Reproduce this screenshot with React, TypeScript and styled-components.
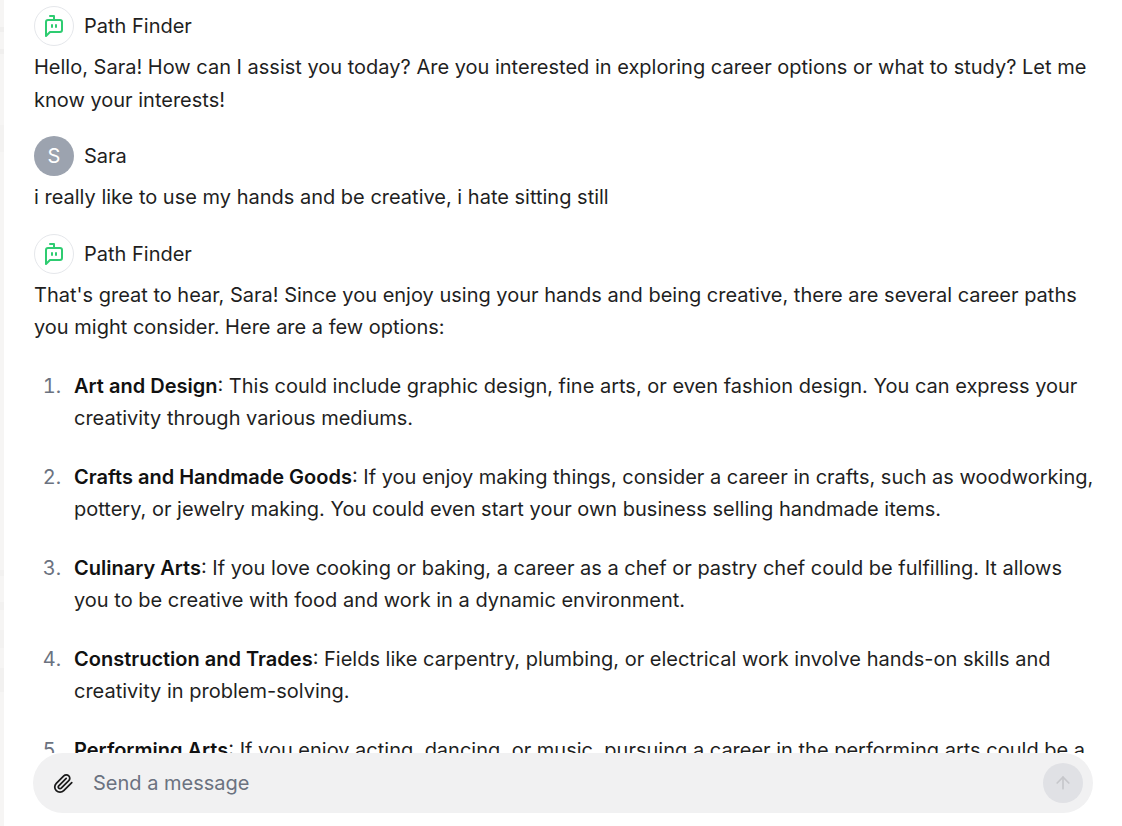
import * as React from "react";
import { FC } from "react";
import styled, { createGlobalStyle } from "styled-components";
import { ArrowUp } from "lucide-react";

const GlobalStyle = createGlobalStyle`
  html, body {
    margin: 0;
    padding: 0;
    height: 100%;
    overflow: hidden;
    background-color: #fff;
    font-family: Inter, "Liberation Sans", sans-serif;
  }
`;

const Page = styled.div`
  display: flex;
  height: 826px;
`;

/* the sidebar behind is almost off screen, only its blurred rows show */
const SideEdge = styled.div`
  width: 4px;
  flex-shrink: 0;
  background: linear-gradient(
    to bottom,
    #f6f5f4 27px,
    #f0efee 27px 32px,
    #f6f5f4 32px 49px,
    #f0efee 49px 54px,
    #f6f5f4 54px 125px,
    #f3f2f1 125px 152px,
    #f6f5f4 152px 570px,
    #f2f1f0 570px 576px,
    #f6f5f4 576px 602px,
    #f2f1f0 602px 610px,
    #f6f5f4 610px 630px,
    #f3f2f1 630px 648px,
    #f6f5f4 648px 668px,
    #f2f1f0 668px 692px,
    #f6f5f4 692px
  );
`;

const Main = styled.div`
  flex: 1;
  min-width: 0;
  position: relative;
  overflow: hidden;
`;

const Messages = styled.div`
  padding: 6px 26px 0px 30px;
  height: 753px;
  box-sizing: border-box;
  overflow: hidden;
  color: #1f1f1f;
  font-size: 20px;
  line-height: 32.5px;
`;

const Message = styled.div`
  margin-bottom: 20px;
`;

const Sender = styled.div`
  display: flex;
  align-items: center;
  gap: 10px;
  height: 40px;
  margin-bottom: 5px;
`;

const Avatar = styled.div<{ $user?: boolean }>`
  width: 40px;
  height: 40px;
  box-sizing: border-box;
  border-radius: 50%;
  display: flex;
  align-items: center;
  justify-content: center;
  color: #fff;
  font-size: 20px;
  background-color: ${(p) => (p.$user ? "#9ca3af" : "#fff")};
  border: ${(p) => (p.$user ? "none" : "1px solid #e5e7eb")};
`;

const SenderName = styled.span`
  font-weight: 400;
  padding-top: 1px;
`;

const Text = styled.p`
  margin: 0;
`;

const OptionList = styled.ol`
  margin: 26px 0 0;
  padding: 0 0 0 32.5px;

  li {
    margin-bottom: 26px;
    padding-left: 7.5px;
  }

  li::marker {
    color: #6b7280;
  }

  strong {
    font-weight: 600;
    color: #111;
  }
`;

const Composer = styled.div`
  position: absolute;
  left: 29px;
  top: 753px;
  width: 1060px;
  height: 60px;
  border-radius: 30px;
  background-color: #f1f1f2;
  display: flex;
  align-items: center;
  padding: 0 10px 0 20px;
  box-sizing: border-box;
`;

const AttachButton = styled.div`
  display: flex;
  color: #1a1a1a;
  margin-right: 19px;
`;

const Placeholder = styled.span`
  flex: 1;
  color: #6b7280;
  font-size: 20px;
`;

const SendButton = styled.div`
  width: 40px;
  height: 40px;
  border-radius: 50%;
  background-color: #e0e1e5;
  color: #c6c7cb;
  display: flex;
  align-items: center;
  justify-content: center;
`;

const BotIcon: FC = () => (
  <svg width="24" height="24" viewBox="0 0 24 24" fill="none" stroke="#2ecc71" strokeWidth="2" strokeLinecap="round" strokeLinejoin="round">
    <path d="M12 6V2H8" />
    <path d="m8 18-4 4V8a2 2 0 0 1 2-2h12a2 2 0 0 1 2 2v8a2 2 0 0 1-2 2Z" />
    <path d="M10 11v2" />
    <path d="M14 11v2" />
  </svg>
);

const ClipIcon: FC = () => (
  <svg width="21" height="21" viewBox="0 0 24 24" fill="none" stroke="currentColor" strokeWidth="2" strokeLinecap="round" strokeLinejoin="round">
    <path d="m21.44 11.05-9.19 9.19a6 6 0 0 1-8.49-8.49l8.57-8.57A4 4 0 1 1 18 8.84l-8.59 8.57a2 2 0 0 1-2.83-2.83l8.49-8.48" />
  </svg>
);

type Option = { title: string; body: string };

const options: Option[] = [
  {
    title: "Art and Design",
    body: ": This could include graphic design, fine arts, or even fashion design. You can express your creativity through various mediums.",
  },
  {
    title: "Crafts and Handmade Goods",
    body: ": If you enjoy making things, consider a career in crafts, such as woodworking, pottery, or jewelry making. You could even start your own business selling handmade items.",
  },
  {
    title: "Culinary Arts",
    body: ": If you love cooking or baking, a career as a chef or pastry chef could be fulfilling. It allows you to be creative with food and work in a dynamic environment.",
  },
  {
    title: "Construction and Trades",
    body: ": Fields like carpentry, plumbing, or electrical work involve hands-on skills and creativity in problem-solving.",
  },
  {
    title: "Performing Arts",
    body: ": If you enjoy acting, dancing, or music, pursuing a career in the performing arts could be a great way to express yourself.",
  },
];

const App: FC = () => {
  return (
    <Page>
      <GlobalStyle />
      <SideEdge />
      <Main>
        <Messages>
          <Message>
            <Sender>
              <Avatar>
                <BotIcon />
              </Avatar>
              <SenderName>Path Finder</SenderName>
            </Sender>
            <Text>
              Hello, Sara! How can I assist you today? Are you interested in exploring career options or what to study? Let me know your interests!
            </Text>
          </Message>
          <Message>
            <Sender>
              <Avatar $user>S</Avatar>
              <SenderName>Sara</SenderName>
            </Sender>
            <Text>i really like to use my hands and be creative, i hate sitting still</Text>
          </Message>
          <Message>
            <Sender>
              <Avatar>
                <BotIcon />
              </Avatar>
              <SenderName>Path Finder</SenderName>
            </Sender>
            <Text>
              That's great to hear, Sara! Since you enjoy using your hands and being creative, there are several career paths you might consider. Here are a few options:
            </Text>
            <OptionList>
              {options.map((option) => (
                <li key={option.title}>
                  <strong>{option.title}</strong>
                  {option.body}
                </li>
              ))}
            </OptionList>
          </Message>
        </Messages>
        <Composer>
          <AttachButton>
            <ClipIcon />
          </AttachButton>
          <Placeholder>Send a message</Placeholder>
          <SendButton>
            <ArrowUp size={20} strokeWidth={2} />
          </SendButton>
        </Composer>
      </Main>
    </Page>
  );
};

export default App;
